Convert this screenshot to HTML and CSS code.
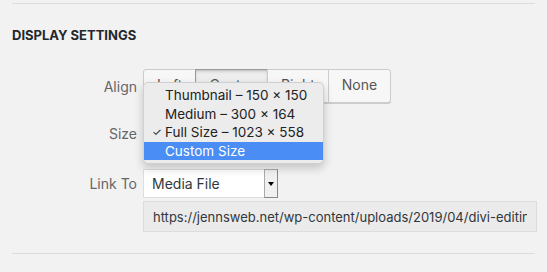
FILE: index.html
```html
<!DOCTYPE html>
<html lang="en">
<head>
    <meta charset="UTF-8">
    <title>Display Settings</title>
    <link rel="stylesheet" href="styles.css">
</head>
<body>
    <div class="panel">
        <h2 class="heading">Display Settings</h2>

        <!-- Align -->
        <div class="setting align-row">
            <span class="label">Align</span>
            <div class="button-group">
                <button class="btn">Left</button>
                <button class="btn pressed">Center</button>
                <button class="btn">Right</button>
                <button class="btn">None</button>
            </div>
        </div>

        <!-- Size, with the open menu on top -->
        <div class="setting size-row">
            <span class="label">Size</span>
            <div class="select-wrap">
                <div class="select">Full Size – 1023 × 558</div>
                <ul class="menu">
                    <li class="menu-item">Thumbnail – 150 × 150</li>
                    <li class="menu-item">Medium – 300 × 164</li>
                    <li class="menu-item checked">Full Size – 1023 × 558</li>
                    <li class="menu-item active">Custom Size</li>
                </ul>
            </div>
        </div>

        <!-- Link To -->
        <div class="setting link-row">
            <span class="label">Link To</span>
            <div class="select link-select">
                <span>Media File</span>
                <span class="arrow-box"><span class="arrow"></span></span>
            </div>
        </div>

        <div class="setting url-row">
            <span class="label"></span>
            <input class="url" type="text" readonly value="https://jennsweb.net/wp-content/uploads/2019/04/divi-editing-screen.jpg">
        </div>
    </div>
</body>
</html>
```

FILE: styles.css
```css
* {
    box-sizing: border-box;
    margin: 0;
    padding: 0;
}
body {
    background: #f2f2f2;
    font-family: Inter, "Noto Sans", sans-serif;
    font-size: 13px;
    color: #666;
}

.panel {
    margin: 3px 12px 0 12px;
    width: 523px;
    border-top: 1px solid #dcdcdc;
    border-bottom: 1px solid #dcdcdc;
    padding-bottom: 21px;
}

.heading {
    font-size: 13px;
    font-weight: 700;
    text-transform: uppercase;
    color: #23282d;
    margin-top: 22px;
    line-height: 18px;
}

/* Rows */
.setting {
    display: grid;
    grid-template-columns: 125px 1fr;
    column-gap: 6px;
    align-items: center;
}
.label {
    text-align: right;
    font-size: 14px;
    color: #666;
}
.align-row {
    margin-top: 25px;
}
.size-row {
    margin-top: 16px;
}
.link-row {
    margin-top: 21px;
}
.url-row {
    margin-top: 3px;
    align-items: start;
}

/* Align buttons */
.button-group {
    display: flex;
}
.btn {
    font-family: inherit;
    font-size: 14px;
    color: #555;
    height: 34px;
    padding: 0 13px 4px;
    background: #f7f7f7;
    border: 1px solid #ccc;
    margin-left: -1px;
    box-shadow: 0 1px 0 #ccc;
}
.btn:first-child {
    margin-left: 0;
    border-radius: 3px 0 0 3px;
}
.btn:last-child {
    border-radius: 0 3px 3px 0;
}
.btn.pressed {
    background: #eee;
    border-color: #999;
    box-shadow: inset 0 2px 5px -3px rgba(0, 0, 0, 0.5);
}

/* Selects */
.select-wrap {
    position: relative;
}
.select {
    width: 135px;
    height: 29px;
    background: #fff;
    border: 1px solid #ddd;
    color: #32373c;
    font-size: 14px;
    display: flex;
    align-items: center;
    padding-left: 8px;
}
.link-select {
    justify-content: space-between;
    padding-right: 0;
}
.arrow-box {
    width: 14px;
    height: 29px;
    background: #f0f0f0;
    border: 1px solid #aaa;
    border-right-color: #888;
    border-bottom-color: #888;
    display: flex;
    align-items: center;
    justify-content: center;
    margin-right: -1px;
}
.arrow {
    width: 0;
    height: 0;
    border-left: 3px solid transparent;
    border-right: 3px solid transparent;
    border-top: 4px solid #000;
}

/* Open menu */
.menu {
    position: absolute;
    left: 0;
    top: -37px;
    width: 181px;
    list-style: none;
    padding: 3px 0;
    background: #ececec;
    border: 1px solid #d0d0d0;
    border-radius: 5px;
    box-shadow: 0 4px 10px rgba(0, 0, 0, 0.2);
}
.menu-item {
    position: relative;
    height: 18.5px;
    line-height: 18.5px;
    padding-left: 21px;
    font-size: 13.5px;
    color: #222;
}
.menu-item.checked::before {
    content: "✓";
    position: absolute;
    left: 8px;
    font-size: 11px;
}
.menu-item.active {
    background: #4a8ef5;
    color: #fff;
}

/* URL field */
.url {
    width: 394px;
    height: 31px;
    background: #ebebeb;
    border: 1px solid #ddd;
    font-family: inherit;
    font-size: 13px;
    color: #32373c;
    padding: 0 9px;
    outline: none;
}
```
